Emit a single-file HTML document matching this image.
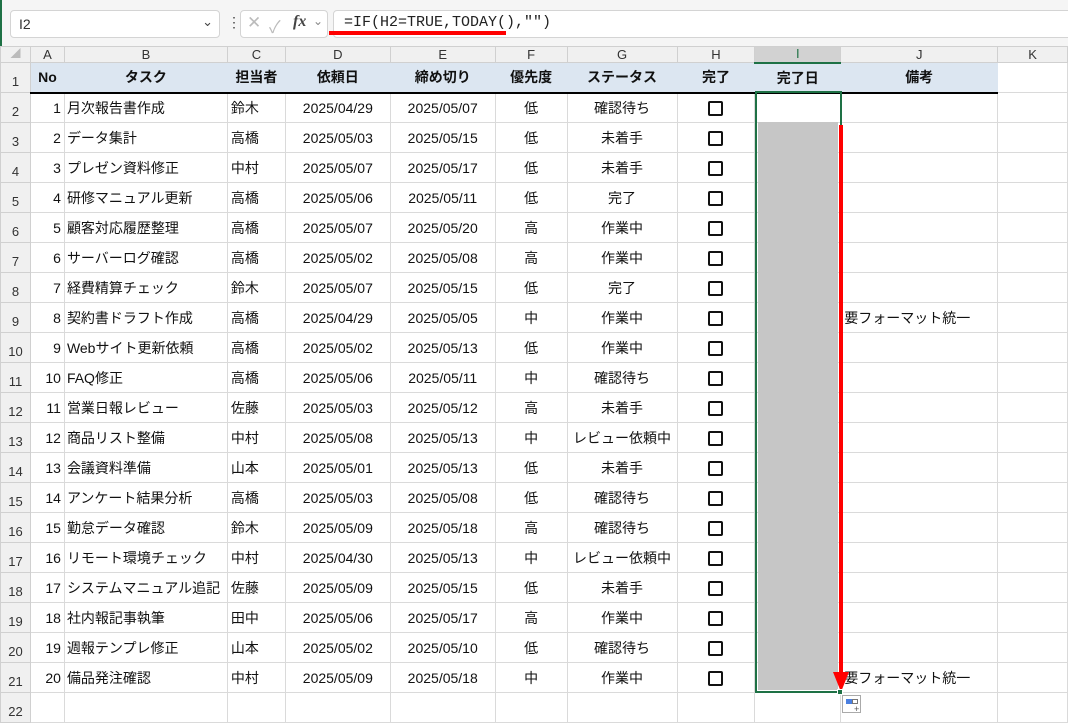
<!DOCTYPE html>
<html><head><meta charset="utf-8"><style>
*{box-sizing:border-box;margin:0;padding:0}
body{width:1068px;height:727px;overflow:hidden;background:#fff;font-family:"Liberation Sans","Noto Sans CJK JP",sans-serif;position:relative}
.top{position:absolute;left:0;top:0;width:1068px;height:46px;background:#f5f5f5;border-left:2px solid #1e7145}
.box{position:absolute;background:#fff;border:1px solid #d4d4d4;border-radius:4px}
table{position:absolute;left:0;top:46px;border-collapse:collapse;table-layout:fixed}
td{border:1px solid #dadada;height:30px;font-size:14px;color:#111;white-space:nowrap;overflow:visible;padding:0 3px;line-height:16px}
tr.ch td{height:16px;line-height:14px;padding:0;background:#f0f0f0;text-align:center;font-size:13px;color:#333;border-color:#d0d0d0}
td.rh{background:#f0f0f0;text-align:center;font-size:13px;color:#333;vertical-align:bottom;padding-bottom:2px;border-color:#d0d0d0}
tr.h td.d{background:#dce6f1;font-weight:bold;text-align:center;border-bottom:2px solid #000;border-left-color:#dce6f1;border-right-color:#dce6f1}
.r{text-align:right}.c{text-align:center}
.cb{display:inline-block;width:15px;height:15px;border:2px solid #111;border-radius:2px;vertical-align:middle}
</style></head><body>
<div class="top">
<div class="box" style="left:8px;top:10px;width:210px;height:28px"><span style="position:absolute;left:8px;top:5px;font-size:14px;color:#333">I2</span><span style="position:absolute;right:6px;top:3px;font-size:13px;color:#444">⌄</span></div>
<div style="position:absolute;left:225px;top:14px;font-size:14px;color:#444">⋮</div>
<div class="box" style="left:238px;top:10px;width:88px;height:28px;color:#bbb;font-size:17px"><span style="position:absolute;left:6px;top:2px">✕</span><span style="position:absolute;left:28px;top:2px">✓</span><span style="position:absolute;left:52px;top:2px;color:#444;font-family:'Liberation Serif',serif;font-style:italic;font-weight:bold;font-size:16px">fx</span><span style="position:absolute;left:72px;top:3px;color:#888;font-size:12px">⌄</span></div>
<div class="box" style="left:331px;top:10px;width:745px;height:28px"><span style="position:absolute;left:10px;top:3px;font-family:'Liberation Mono',monospace;font-size:15px;color:#222">=IF(H2=TRUE,TODAY(),"")</span></div>
<div style="position:absolute;left:327px;top:31px;width:177px;height:4px;background:#f00"></div>
</div>
<table>
<colgroup><col style="width:30px"><col style="width:34px"><col style="width:163px"><col style="width:58px"><col style="width:105px"><col style="width:105px"><col style="width:72px"><col style="width:110px"><col style="width:78px"><col style="width:86px"><col style="width:157px"><col style="width:70px"></colgroup>
<tr class="ch"><td style="font-size:10px;color:#bbb">◢</td><td>A</td><td>B</td><td>C</td><td>D</td><td>E</td><td>F</td><td>G</td><td>H</td><td style="background:#d2d2d2;border-bottom:2px solid #1e7145;color:#1e7145">I</td><td>J</td><td>K</td></tr>
<tr class="h"><td class="rh">1</td><td class="d">No</td><td class="d">タスク</td><td class="d">担当者</td><td class="d">依頼日</td><td class="d">締め切り</td><td class="d">優先度</td><td class="d">ステータス</td><td class="d">完了</td><td class="d">完了日</td><td class="d">備考</td><td></td></tr>
</table>
<div style="position:absolute;left:755px;top:91px;width:87px;height:602px;border:2px solid #1e7145"></div>
<div style="position:absolute;left:758px;top:122px;width:80px;height:568px;background:#c6c6c6"></div>
<div style="position:absolute;left:839px;top:125px;width:4px;height:550px;background:#f00"></div>
<div style="position:absolute;left:833px;top:672px;width:0;height:0;border-left:8px solid transparent;border-right:8px solid transparent;border-top:20px solid #f00"></div>
<div style="position:absolute;left:837px;top:689px;width:6px;height:6px;background:#1e7145;border:1px solid #fff"></div>
<div style="position:absolute;left:842px;top:695px;width:19px;height:18px;border:1px solid #aaa;background:#fff"><div style="position:absolute;left:3px;top:3px;width:6px;height:5px;background:#4a7fe0"></div><div style="position:absolute;left:9px;top:3px;width:6px;height:5px;border:1px solid #777"></div><div style="position:absolute;left:11px;top:8px;font-size:9px;color:#555">+</div></div>
<script>
const d=[["1","月次報告書作成","鈴木","2025/04/29","2025/05/07","低","確認待ち",""],["2","データ集計","高橋","2025/05/03","2025/05/15","低","未着手",""],["3","プレゼン資料修正","中村","2025/05/07","2025/05/17","低","未着手",""],["4","研修マニュアル更新","高橋","2025/05/06","2025/05/11","低","完了",""],["5","顧客対応履歴整理","高橋","2025/05/07","2025/05/20","高","作業中",""],["6","サーバーログ確認","高橋","2025/05/02","2025/05/08","高","作業中",""],["7","経費精算チェック","鈴木","2025/05/07","2025/05/15","低","完了",""],["8","契約書ドラフト作成","高橋","2025/04/29","2025/05/05","中","作業中","要フォーマット統一"],["9","Webサイト更新依頼","高橋","2025/05/02","2025/05/13","低","作業中",""],["10","FAQ修正","高橋","2025/05/06","2025/05/11","中","確認待ち",""],["11","営業日報レビュー","佐藤","2025/05/03","2025/05/12","高","未着手",""],["12","商品リスト整備","中村","2025/05/08","2025/05/13","中","レビュー依頼中",""],["13","会議資料準備","山本","2025/05/01","2025/05/13","低","未着手",""],["14","アンケート結果分析","高橋","2025/05/03","2025/05/08","低","確認待ち",""],["15","勤怠データ確認","鈴木","2025/05/09","2025/05/18","高","確認待ち",""],["16","リモート環境チェック","中村","2025/04/30","2025/05/13","中","レビュー依頼中",""],["17","システムマニュアル追記","佐藤","2025/05/09","2025/05/15","低","未着手",""],["18","社内報記事執筆","田中","2025/05/06","2025/05/17","高","作業中",""],["19","週報テンプレ修正","山本","2025/05/02","2025/05/10","低","確認待ち",""],["20","備品発注確認","中村","2025/05/09","2025/05/18","中","作業中","要フォーマット統一"]];
const t=document.querySelector('table');
d.forEach((r,i)=>{const tr=document.createElement('tr');tr.innerHTML=`<td class="rh">${i+2}</td><td class="r">${r[0]}</td><td style="padding-left:2px">${r[1]}</td><td>${r[2]}</td><td class="c">${r[3]}</td><td class="c">${r[4]}</td><td class="c">${r[5]}</td><td class="c">${r[6]}</td><td class="c"><span class="cb"></span></td><td></td><td>${r[7]}</td><td></td>`;t.appendChild(tr);});
const tr=document.createElement('tr');tr.innerHTML='<td class="rh">22</td>'+'<td></td>'.repeat(11);t.appendChild(tr);
</script>
</body></html>
